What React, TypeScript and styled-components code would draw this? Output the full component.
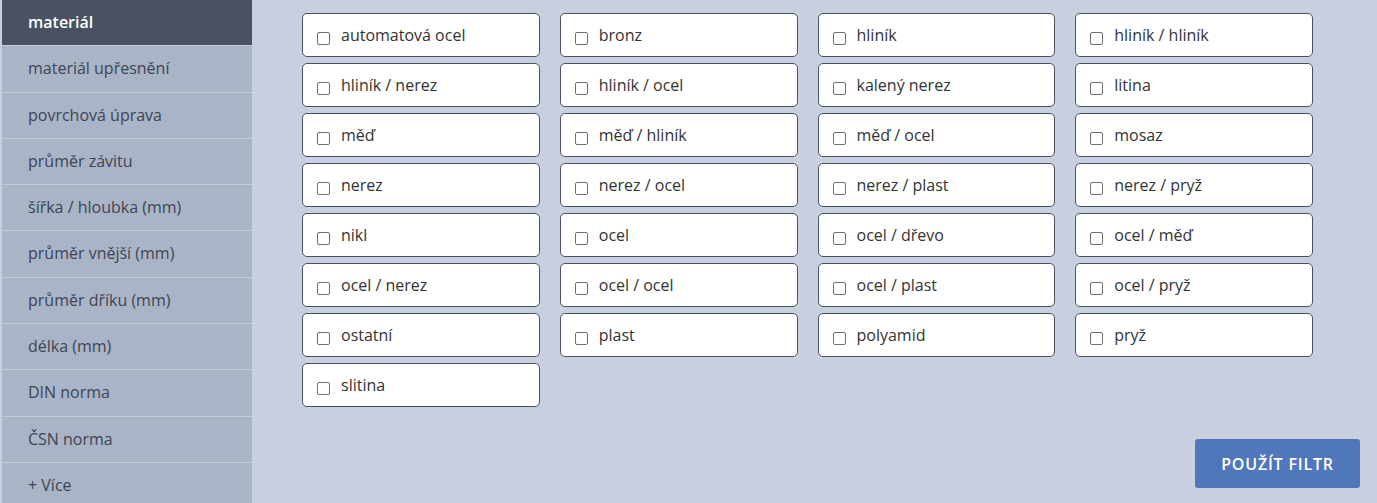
import { createGlobalStyle, styled } from 'styled-components'

const GlobalStyle = createGlobalStyle`
  html, body {
    margin: 0;
    padding: 0;
    background: #c8d0df;
    font-family: 'Open Sans', 'Noto Sans', sans-serif;
  }
  * { box-sizing: border-box; }
`

const Layout = styled.div`
  display: flex;
  align-items: flex-start;
  height: 503px;
  overflow: hidden;
  padding-left: 2px;
`

const Sidebar = styled.nav`
  width: 250px;
  flex-shrink: 0;
  display: flex;
  flex-direction: column;
  background: #a9b4c7;
`

const SideItem = styled.div<{ $active?: boolean }>`
  height: 46.3px;
  padding: 12px 0 0 26px;
  font-size: 16px;
  line-height: 20px;
  border-bottom: 1px solid #c3cbd9;
  background: ${({ $active }) => ($active ? '#4a5261' : '#a9b4c7')};
  color: ${({ $active }) => ($active ? '#ffffff' : '#3e4553')};
  font-weight: ${({ $active }) => ($active ? 600 : 400)};
  white-space: nowrap;
`

const Main = styled.main`
  flex: 1;
  padding: 13px 17px 0 50px;
  display: flex;
  flex-direction: column;
`

const Grid = styled.div`
  width: 1011px;
  display: grid;
  grid-template-columns: repeat(4, 1fr);
  gap: 6px 20px;
`

const Option = styled.label`
  height: 44px;
  display: flex;
  align-items: center;
  gap: 11px;
  padding: 0 0 0 14px;
  background: #ffffff;
  border: 1px solid #4a5261;
  border-radius: 5px;
  font-size: 16px;
  color: #333333;
  cursor: pointer;
`

const Box = styled.span`
  width: 13px;
  height: 13px;
  margin-top: 7px;
  border: 1px solid #6f6f6f;
  border-radius: 2px;
  background: #ffffff;
  flex-shrink: 0;
`

const OptionText = styled.span`
  margin-top: 0;
  white-space: nowrap;
`

const Actions = styled.div`
  display: flex;
  justify-content: flex-end;
  margin-top: 32px;
`

const ApplyButton = styled.button`
  width: 165px;
  height: 49px;
  border: none;
  border-radius: 3px;
  background: #5076bb;
  color: #ffffff;
  font-family: inherit;
  font-size: 16px;
  font-weight: 600;
  letter-spacing: 0.8px;
  text-transform: uppercase;
  cursor: pointer;
`

const categories = [
  'materiál',
  'materiál upřesnění',
  'povrchová úprava',
  'průměr závitu',
  'šířka / hloubka (mm)',
  'průměr vnější (mm)',
  'průměr dříku (mm)',
  'délka (mm)',
  'DIN norma',
  'ČSN norma',
  '+ Více',
]

const materials = [
  'automatová ocel', 'bronz', 'hliník', 'hliník / hliník',
  'hliník / nerez', 'hliník / ocel', 'kalený nerez', 'litina',
  'měď', 'měď / hliník', 'měď / ocel', 'mosaz',
  'nerez', 'nerez / ocel', 'nerez / plast', 'nerez / pryž',
  'nikl', 'ocel', 'ocel / dřevo', 'ocel / měď',
  'ocel / nerez', 'ocel / ocel', 'ocel / plast', 'ocel / pryž',
  'ostatní', 'plast', 'polyamid', 'pryž',
  'slitina',
]

export default function App() {
  return (
    <>
      <GlobalStyle />
      <Layout>
        <Sidebar>
          {categories.map((c, i) => (
            <SideItem key={c} $active={i === 0}>{c}</SideItem>
          ))}
        </Sidebar>
        <Main>
          <Grid>
            {materials.map(m => (
              <Option key={m}>
                <Box />
                <OptionText>{m}</OptionText>
              </Option>
            ))}
          </Grid>
          <Actions>
            <ApplyButton>Použít filtr</ApplyButton>
          </Actions>
        </Main>
      </Layout>
    </>
  )
}
